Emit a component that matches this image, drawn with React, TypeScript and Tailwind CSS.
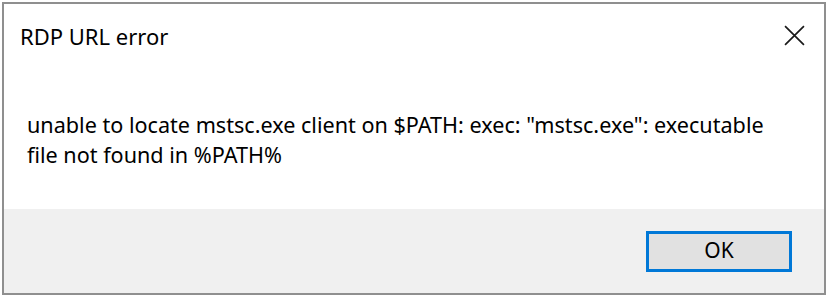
import React from "react";

export default function App() {
  return (
    <div
      className="w-[828px] h-[297px] bg-white p-[2px]"
      style={{ fontFamily: '"Noto Sans", "Open Sans", sans-serif' }}
    >
      <div className="h-full flex flex-col border-2 border-[#8f8f8f]">
        <div className="flex-1 bg-white flex flex-col">
          <div className="flex items-start justify-between pl-[16px] pr-[18px] pt-[17px]">
            <div className="text-[22px] leading-[30px] text-black">RDP URL error</div>
            <button className="mt-[2px] w-[24px] h-[24px] flex items-center justify-center">
              <svg width="21" height="21" viewBox="0 0 20 20">
                <path d="M1 1 L19 19 M19 1 L1 19" stroke="#1a1a1a" strokeWidth="1.6" fill="none" />
              </svg>
            </button>
          </div>
          <div className="pl-[23px] pr-[30px] pt-[59px] text-[21.6px] leading-[30px] text-black whitespace-nowrap">
            unable to locate mstsc.exe client on $PATH: exec: "mstsc.exe": executable
            <br />
            file not found in %PATH%
          </div>
        </div>
        <div className="h-[84px] bg-[#f0f0f0] flex items-center justify-end pr-[32px]">
          <button className="w-[146px] h-[41px] border-[3px] border-[#0078d7] bg-[#e1e1e1] text-[21px] text-black flex items-center justify-center">
            OK
          </button>
        </div>
      </div>
    </div>
  );
}
